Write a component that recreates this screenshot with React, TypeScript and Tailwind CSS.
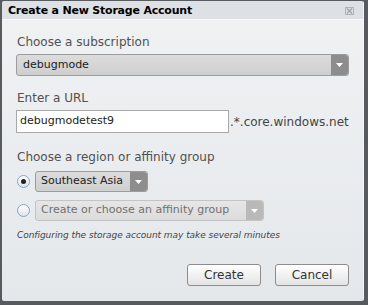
import React from 'react';

const Arrow = ({ disabled }: { disabled?: boolean }) => (
  <div
    className={`flex items-center justify-center w-[17px] self-stretch rounded-r-[3px] ${
      disabled ? 'bg-[#b9b9b9]' : 'bg-[#8d8d8d]'
    }`}
  >
    <svg width="7" height="4" viewBox="0 0 7 4">
      <path d="M0 0h7L3.5 4z" fill="#fff" />
    </svg>
  </div>
);

const Radio = ({ checked }: { checked?: boolean }) => (
  <div className="w-[13px] h-[13px] rounded-full border border-[#8aa4bd] bg-gradient-to-b from-[#ffffff] to-[#dfe4ea] flex items-center justify-center shadow-[0_0_0_1px_#e6edf5]">
    {checked && <div className="w-[5px] h-[5px] rounded-full bg-[#222]" />}
  </div>
);

const App: React.FC = () => {
  return (
    <div
      className="w-[368px] h-[305px] bg-[#575b60] pl-[2px] pt-[1px] pr-[4px] pb-[4px]"
      style={{ fontFamily: '"DejaVu Sans", Verdana, sans-serif' }}
    >
      <div className="h-full flex flex-col rounded-[2px] overflow-hidden border-r border-[#f4f6f8]">
        {/* Title bar */}
        <div className="h-[19px] bg-[#dde1e5] flex items-center justify-between pl-[6px] pr-[9px] border-b border-[#f7f8f9]">
          <span className="text-[11px] font-bold text-black tracking-[-0.2px] pt-[2px]">Create a New Storage Account</span>
          <svg width="9" height="8" viewBox="0 0 9 8" className="mt-[2px]">
            <rect x="0.5" y="0.5" width="8" height="7" fill="none" stroke="#b0b4b8" />
            <path d="M2 1.5l5 5M7 1.5l-5 5" stroke="#9ea2a6" strokeWidth="1.3" />
          </svg>
        </div>

        {/* Body */}
        <div className="flex-1 bg-gradient-to-b from-[#eff1f3] to-[#e5e8eb] px-[14px] pt-[15px] flex flex-col">
          <div className="text-[12px] leading-[14px] text-[#505050] pl-[1px]">Choose a subscription</div>
          <div className="mt-[5px] h-[22px] flex items-center rounded-[3px] border border-[#9c9c9c] bg-gradient-to-b from-[#dcdcdc] to-[#cfcfcf]">
            <span className="flex-1 pl-[6px] text-[11px] text-[#222]">debugmode</span>
            <Arrow />
          </div>

          <div className="mt-[15px] text-[12px] leading-[14px] text-[#505050] pl-[1px]">Enter a URL</div>
          <div className="mt-[5px] flex items-center">
            <div className="w-[213px] h-[23px] bg-white border border-[#a9a9a9] flex items-center pl-[3px] text-[11px] text-[#222]">
              debugmodetest9
            </div>
            <span className="ml-[1px] text-[12px] text-[#444]">.*.core.windows.net</span>
          </div>

          <div className="mt-[17px] text-[12px] leading-[14px] text-[#505050] pl-[1px]">Choose a region or affinity group</div>
          <div className="mt-[7px] flex items-center gap-[5px] pl-[1px]">
            <Radio checked />
            <div className="w-[113px] h-[21px] flex items-center rounded-[3px] border border-[#9c9c9c] bg-gradient-to-b from-[#dcdcdc] to-[#cfcfcf]">
              <span className="flex-1 pl-[5px] text-[11px] text-[#222]">Southeast Asia</span>
              <Arrow />
            </div>
          </div>
          <div className="mt-[8px] flex items-center gap-[5px] pl-[1px]">
            <Radio />
            <div className="w-[229px] h-[21px] flex items-center rounded-[3px] border border-[#c4c4c4] bg-gradient-to-b from-[#e6e6e6] to-[#dcdcdc]">
              <span className="flex-1 pl-[5px] text-[11px] text-[#707070]">Create or choose an affinity group</span>
              <Arrow disabled />
            </div>
          </div>

          <div className="mt-[8px] text-[9px] italic text-[#444] pl-[1px] tracking-[-0.05px]">
            Configuring the storage account may take several minutes
          </div>

          <div className="mt-[21px] flex justify-end gap-[14px]">
            <button className="w-[74px] h-[22px] rounded-[3px] border border-[#8c8c8c] bg-gradient-to-b from-[#ffffff] to-[#e4e4e4] text-[12px] text-[#333]">
              Create
            </button>
            <button className="w-[74px] h-[22px] rounded-[3px] border border-[#8c8c8c] bg-gradient-to-b from-[#ffffff] to-[#e4e4e4] text-[12px] text-[#333]">
              Cancel
            </button>
          </div>
        </div>
      </div>
    </div>
  );
};

export default App;
